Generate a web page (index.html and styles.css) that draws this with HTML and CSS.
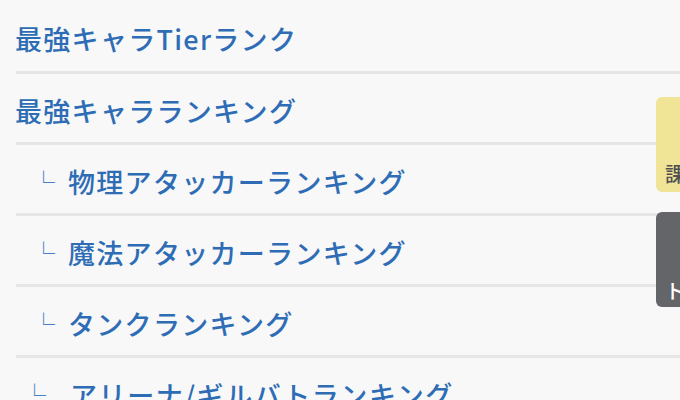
FILE: index.html
```html
<!DOCTYPE html>
<html lang="ja">
<head>
<meta charset="utf-8">
<link rel="stylesheet" href="styles.css">
</head>
<body>
<ul class="menu">
  <li class="item first"><a>最強キャラTierランク</a></li>
  <li class="item"><a>最強キャラランキング</a></li>
  <li class="item sub"><span class="mark">└</span><a>物理アタッカーランキング</a></li>
  <li class="item sub"><span class="mark">└</span><a>魔法アタッカーランキング</a></li>
  <li class="item sub"><span class="mark">└</span><a>タンクランキング</a></li>
  <li class="item sub last"><span class="mark">└</span><a>アリーナ/ギルバトランキング</a></li>
</ul>
<div class="tab tab-yellow"><span>課金</span></div>
<div class="tab tab-gray"><span>トップ</span></div>
</body>
</html>
```
FILE: styles.css
```css
html, body {
  margin: 0;
  padding: 0;
  background: #f8f8f8;
  overflow: hidden;
}
body {
  width: 680px;
  height: 400px;
  position: relative;
  font-family: "Noto Sans CJK JP", "Noto Sans", sans-serif;
}
.menu {
  list-style: none;
  margin: 0;
  padding: 0 0 0 16px;
}
.item {
  box-sizing: border-box;
  height: 71px;
  padding-top: 4px;
  display: flex;
  align-items: center;
  border-bottom: 3px solid #e6e6e6;
  font-size: 27px;
  font-weight: 500;
  letter-spacing: 1.3px;
  color: #2e6db5;
  white-space: nowrap;
}
.item.first {
  height: 74px;
  padding-top: 6px;
}
.item a {
  color: inherit;
  text-decoration: none;
  margin-left: -1px;
}
.item.last a {
  letter-spacing: 1.6px;
}
.sub .mark {
  font-size: 23px;
  font-weight: 300;
  color: #4a80c8;
  width: 37px;
  margin-left: 16px;
  letter-spacing: 0;
}
.sub.last .mark {
  margin-left: 7px;
  width: 48px;
}
.tab {
  position: absolute;
  left: 656px;
  width: 80px;
  height: 95px;
  border-radius: 6px 0 0 6px;
  box-sizing: border-box;
  padding: 64px 0 0 9px;
  font-family: "Noto Sans CJK JP", sans-serif;
  font-size: 20px;
  line-height: 26px;
  font-weight: 500;
  white-space: nowrap;
  overflow: hidden;
}
.tab-yellow {
  top: 97px;
  background: #f0e497;
  color: #4f4f51;
}
.tab-gray {
  top: 212px;
  background: #646568;
  color: #ffffff;
  padding-top: 66px;
}
```
